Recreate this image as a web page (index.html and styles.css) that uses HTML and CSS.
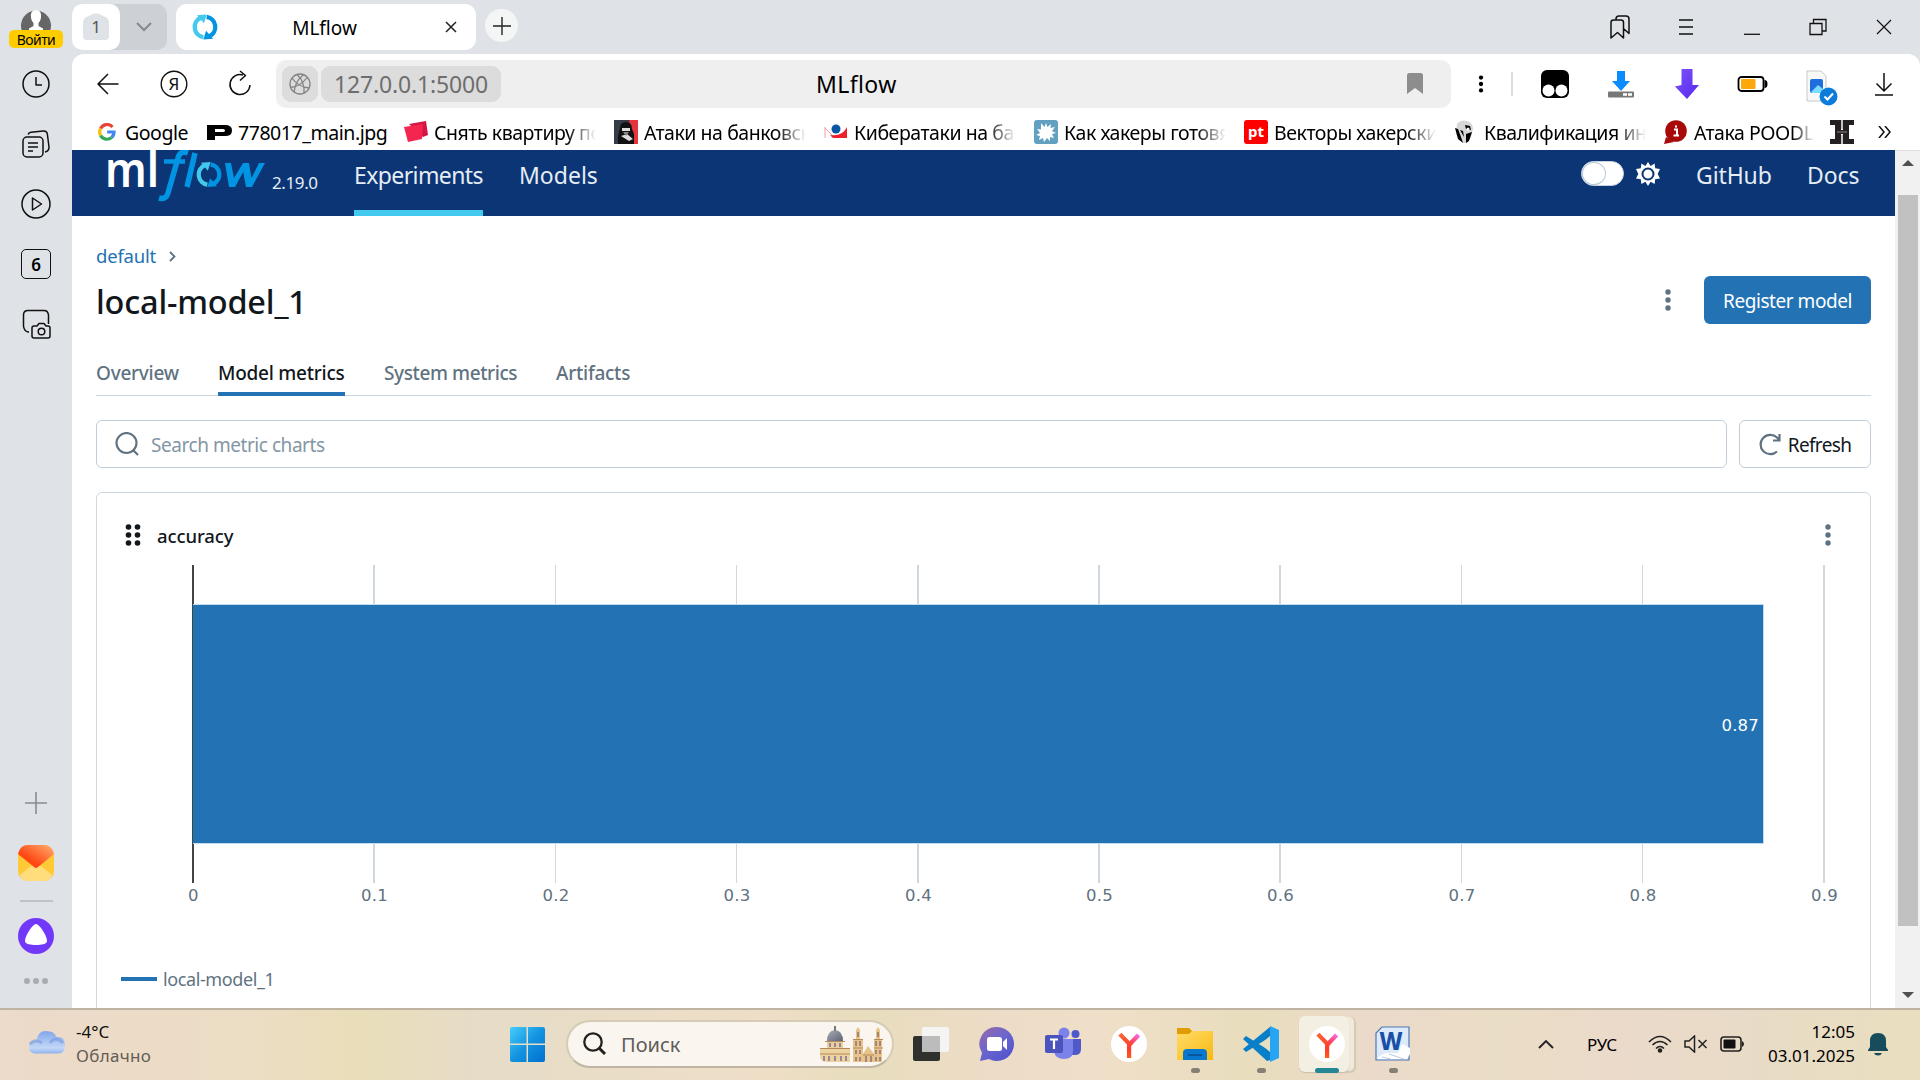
FILE: index.html
```html
<!DOCTYPE html>
<html lang="ru">
<head>
<meta charset="utf-8">
<title>MLflow</title>
<link rel="stylesheet" href="styles.css">
</head>
<body>
<svg class="defs" width="0" height="0">
  <defs>
    <linearGradient id="mailflap" x1="0" y1="1" x2="1" y2="0"><stop offset=".35" stop-color="#ff4714"/><stop offset="1" stop-color="#ffb070"/></linearGradient>
    <linearGradient id="win" x1="0" y1="0" x2="1" y2="1"><stop offset="0" stop-color="#45cdfc"/><stop offset=".5" stop-color="#1494e0"/><stop offset="1" stop-color="#0070cf"/></linearGradient>
    <linearGradient id="chat" x1="0" y1="0" x2=".8" y2="1"><stop offset="0" stop-color="#9a6aa8"/><stop offset=".5" stop-color="#6c66cc"/><stop offset="1" stop-color="#5153d0"/></linearGradient>
    <linearGradient id="yleft" x1="0" y1="0" x2="0" y2="1"><stop offset="0" stop-color="#fa6b3a"/><stop offset=".6" stop-color="#ff3a2a"/><stop offset="1" stop-color="#ff5a1c"/></linearGradient>
    <linearGradient id="yright" x1="0" y1="1" x2="1" y2="0"><stop offset=".15" stop-color="#ff3b3b"/><stop offset="1" stop-color="#f96ae6"/></linearGradient>
    <linearGradient id="folder" x1="0" y1="0" x2="1" y2="1"><stop offset="0" stop-color="#ffdc6b"/><stop offset="1" stop-color="#f9b90f"/></linearGradient>
    <linearGradient id="cloud" x1="0" y1="0" x2="0" y2="1"><stop offset="0" stop-color="#82a6ea"/><stop offset=".75" stop-color="#c3d8f7"/><stop offset="1" stop-color="#8fb2ee"/></linearGradient>
    <linearGradient id="dome" x1="0" y1="0" x2="1" y2="1"><stop offset="0" stop-color="#a9acb8"/><stop offset="1" stop-color="#5f6475"/></linearGradient>
    <linearGradient id="purple" x1="0" y1="0" x2="1" y2="1"><stop offset="0" stop-color="#7c55f7"/><stop offset="1" stop-color="#5726f0"/></linearGradient>
    <symbol id="yandex" viewBox="0 0 36 36"><circle cx="18" cy="18" r="18" fill="#fff"/><path d="M18 19 27.6 9" stroke="url(#yright)" stroke-width="4.4"/><path d="M7.3 9.4 16 18.5V32h4.2V16.8L10.5 6.8z" fill="url(#yleft)"/></symbol>
    <symbol id="kebab" viewBox="0 0 8 24"><circle cx="4" cy="4" r="2.7"/><circle cx="4" cy="12" r="2.7"/><circle cx="4" cy="20" r="2.7"/></symbol>
    <symbol id="cycle" viewBox="0 0 24 24"><path d="M10.500 21.400A9.500 9.500 0 0 1 8 3.400" fill="none" stroke="#43c9ed" stroke-width="4"/><path d="M4.500 1.200 13.500.5 11 8.500z" fill="#43c9ed"/><path d="M13.500 2.600A9.500 9.500 0 0 1 16 20.600" fill="none" stroke="#0194e2" stroke-width="4"/><path d="m19.500 22.800-9 .7 2.500-8z" fill="#0194e2"/></symbol>
  </defs>
</svg>

<div class="browser">
  <aside class="rail">
    <div class="account">
      <svg width="30" height="25" viewBox="0 0 30 25"><path d="M1 25A15 15 0 1 1 29 25z" fill="#666"/><path d="M15 4c-4 0-5.500 3-5 7 .3 3 1 4.500 2.500 6v3L8 22.500V25h14v-2.500L17.500 20v-3c1.500-1.500 2.200-3 2.500-6 .5-4-1-7-5-7z" fill="#fff"/></svg>
      <span class="login">Войти</span>
    </div>
    <div class="cell"><svg width="30" height="30" class="line"><circle cx="15" cy="15" r="13"/><path d="M15 8v8h6"/></svg></div>
    <div class="cell"><svg width="30" height="30" class="line"><rect x="2" y="8" width="20" height="20" rx="4"/><path d="M7 5.500Q8 3.500 10 3.200L22 2q4-.3 4.400 3.500L28 18q.3 4-4 5M7 14h10M7 18h10M7 22h5"/></svg></div>
    <div class="cell"><svg width="30" height="30" class="line"><circle cx="15" cy="15" r="14"/><path d="M11.500 9v12l9-6z"/></svg></div>
    <div class="cell"><span class="count">6</span></div>
    <div class="cell"><svg width="30" height="30" class="line"><path d="M8 23H7q-4-1-4.500-6V6q0-4.500 4.500-4.500h16q4 0 4.500 4.500v9M14 17h2l2-2.500h5L25 17h2q2 0 2 2v8q0 2-2 2H13q-2 0-2-2v-8q0-2 2-2z"/><circle cx="20.500" cy="22.500" r="3.300"/></svg></div>
    <div class="spring"></div>
    <div class="cell"><svg width="22" height="22"><path d="M11 0v22M0 11h22" stroke="#888c90" stroke-width="1.600"/></svg></div>
    <div class="cell"><svg width="36" height="36"><rect width="36" height="36" rx="10" fill="#ffca35"/><path d="M2 30 18 17l16 13q-2 6-8 6H10q-6 0-8-6z" fill="#ffdc7c"/><path d="M0 9Q2 0 10 0h16q8 0 10 9L20 22q-2 2-4 0z" fill="url(#mailflap)"/></svg></div>
    <div class="rule"><i></i></div>
    <div class="cell alice"><svg width="36" height="36"><circle cx="18" cy="18" r="18" fill="#7238fa"/><path d="M18 6c3.500 0 11 12 11 17 0 3.300-6 4-11 4s-11-.7-11-4C7 18 14.500 6 18 6z" fill="#fff"/></svg></div>
    <div class="cell more"><svg width="24" height="6" fill="#a9adb1"><circle cx="3" cy="3" r="3"/><circle cx="12" cy="3" r="3"/><circle cx="21" cy="3" r="3"/></svg></div>
  </aside>

  <section class="window">
    <header class="tabs">
      <div class="group"><span class="group-count"><svg width="26" height="28"><path d="M0 9q0-3 2.500-4.500L10.500.8q2.500-1.200 5 0l8 3.700Q26 6 26 9v14q0 4-4 4H4q-4 0-4-4z" fill="#dfe2e7"/><text x="13" y="20" text-anchor="middle" font-size="17" fill="#555">1</text></svg></span><span class="group-more"><svg width="16" height="10"><path d="m1 1 7 7 7-7" fill="none" stroke="#85898d" stroke-width="2"/></svg></span></div>
      <div class="tab"><svg width="26" height="26"><use href="#cycle"/></svg><span class="tab-name">MLflow</span><svg width="12" height="12"><path d="m1 1 10 10M11 1 1 11" stroke="#222" stroke-width="1.500"/></svg></div>
      <div class="newtab"><svg width="18" height="18"><path d="M9 0v18M0 9h18" stroke="#222" stroke-width="1.400"/></svg></div>
      <div class="spring"></div>
      <div class="wincell"><svg width="20" height="24" class="line"><path d="M1 23V7.500Q1 5 3.500 5h7.500q2.500 0 2.500 2.500V23l-6-5.500zM6 4.500V4q0-3 3-3h7q3 0 3 3v14.500l-5-4.500"/></svg></div>
      <div class="wincell"><svg width="14" height="16"><path d="M0 1h14M0 8h14M0 15h14" stroke="#111" stroke-width="1.400"/></svg></div>
      <div class="wincell"><svg width="16" height="16"><path d="M0 15.300h16" stroke="#111" stroke-width="1.300"/></svg></div>
      <div class="wincell"><svg width="18" height="18"><path d="M1 5.500h12v11H1zM4.500 5V1.500H17V13h-4" fill="none" stroke="#111" stroke-width="1.300"/></svg></div>
      <div class="wincell"><svg width="16" height="16"><path d="m1 1 14 14M15 1 1 15" stroke="#111" stroke-width="1.200"/></svg></div>
    </header>

    <div class="chrome">
      <div class="toolbar">
        <div class="nav"><svg width="22" height="22" class="line"><path d="M21.500 11H1M11 1 1 11l10 10"/></svg></div>
        <div class="nav"><svg width="28" height="28"><circle cx="14" cy="14" r="12.800" fill="none" stroke="#111" stroke-width="1.400"/><text x="14" y="20" text-anchor="middle" font-size="17" fill="#111">Я</text></svg></div>
        <div class="nav"><svg width="24" height="28" class="line"><path d="M15 5A10 10 0 1 0 22 15M12 1l5.500 4.500-5.500 5"/></svg></div>
        <div class="address">
          <span class="globe"><svg width="22" height="22" fill="none" stroke="#848484" stroke-width="1.300"><circle cx="11" cy="11" r="10"/><path d="M3 5q6 9 17.500 10M2 14.500Q12 13 18 4.500M5 19.500Q6 8 14.500 1.700M8 1.500q8 7 7 19"/></svg></span>
          <span class="host">127.0.0.1:5000</span>
          <span class="page-name">MLflow</span>
          <svg width="16" height="22"><path d="M0 2.500Q0 0 2.500 0h11Q16 0 16 2.500V21l-8-6-8 6z" fill="#8d8d8d"/></svg>
        </div>
        <svg class="tool-more" width="8" height="24" viewBox="-1 -1 10 26"><use href="#kebab" width="8" height="24"/></svg>
        <i class="divider"></i>
        <div class="exts">
          <div><svg width="28" height="28"><rect width="28" height="28" rx="6"/><circle cx="7.500" cy="20.500" r="6" fill="#fff"/><circle cx="20.500" cy="20.500" r="6" fill="#fff"/></svg></div>
          <div><svg width="26" height="28"><path d="M9 1h8v10h5l-9 10-9-10h5z" fill="#0a8cff"/><rect y="21.500" width="26" height="6" rx="1" fill="#777"/><path d="M15 24.500h4M20 24.500h4" stroke="#fff" stroke-width="2.500"/></svg></div>
          <div><svg width="24" height="30"><path d="M6.500 0h11v16H24L12 30 0 17.500 6.500 16z" fill="url(#purple)"/></svg></div>
          <div><svg width="32" height="16"><rect x="1.500" y="1" width="25" height="14" rx="3" fill="#fff" stroke="#000" stroke-width="1.800"/><rect x="4" y="3" width="14.500" height="10" rx="1" fill="#ffa60a"/><path d="M27.500 4q3 0 3 4t-3 4z"/></svg></div>
          <div class="pic"><svg width="32" height="36"><path d="M1 1h14l5 5v25H1z" fill="#f8f8f8" stroke="#c8c8c8"/><rect x="4" y="9" width="13" height="14" rx="2" fill="#1d6edc"/><path d="m5 22 7-7 5 4v3q0 1-1 1H6z" fill="#7bdcff"/><circle cx="22.500" cy="26.500" r="9" fill="#0b7bdc"/><path d="m18.500 26.500 3 3 5.500-6" fill="none" stroke="#fff" stroke-width="2"/></svg></div>
          <div class="dl"><svg width="18" height="24" class="line"><path d="M9 1v18M1.500 11.500 9 19l7.500-7.500M0 23h18"/></svg></div>
        </div>
      </div>

      <nav class="bookmarks">
        <a class="bm g"><svg width="18" height="18" viewBox="0 0 18 18" fill="none" stroke-width="3.200"><path d="M14.500 4A7.200 7.200 0 0 0 2.600 5.500" stroke="#ea4335"/><path d="M2.600 5.500a7.300 7.300 0 0 0 0 7" stroke="#fbbc05"/><path d="M2.600 12.500a7.200 7.200 0 0 0 11 2" stroke="#34a853"/><path d="M13.600 14.500Q16 12.500 16 9H9.200" stroke="#4285f4"/></svg><span>Google</span></a>
        <a class="bm p"><svg width="25" height="15"><path d="M0 0h18q7 0 7 5.500T18 11H8v4H0zM8 4v3h8q2 0 2-1.500T16 4z" fill-rule="evenodd"/></svg><span>778017_main.jpg</span></a>
        <a class="bm fade"><svg width="24" height="22"><path d="m5 3 17-3 2 14-5 2z" fill="#d31744"/><path d="m0 6 19-3-1 15-14 3z" fill="#f4264f"/></svg><span>Снять квартиру по</span></a>
        <a class="bm fade"><svg width="24" height="24"><path d="M0 0h24v24H0z" fill="#353c48"/><path d="M15 0h9v24h-6z" fill="#e5343c"/><path d="M6 8q0-6 6-6t6 7l2 5v10H4V16z" fill="#111"/><path d="M8 8h8v3H8zM7 16l6-2 6 5-4 2z" fill="#ddd"/><path d="M9 12h6l-3 4z" fill="#888"/></svg><span>Атаки на банковск</span></a>
        <a class="bm fade"><svg width="24" height="16"><path d="m1 4 9 9M1 3v11" stroke="#f59ba0" fill="none"/><path d="M6 11q12 2 17-8v11H9z" fill="#ee202b"/><circle cx="12" cy="5" r="4.500" fill="#0a55a5"/></svg><span>Кибератаки на ба</span></a>
        <a class="bm fade"><svg width="24" height="24"><rect width="24" height="24" rx="3" fill="#61a0c0"/><path d="m12 3 1.500 4L17 4l-.5 4L21 7l-3 4 4 2-4 1 2 4-4-1v4l-3-3-3 4-1-4-4 2 1-4-4-1 4-2-3-4 4 .5L7 3l3.500 4z" fill="#fff"/></svg><span>Как хакеры готовя</span></a>
        <a class="bm fade"><svg width="24" height="24"><rect width="24" height="24" rx="3" fill="#f00"/><text x="12" y="16.500" text-anchor="middle" font-size="15" font-weight="700" fill="#fff">pt</text></svg><span>Векторы хакерски</span></a>
        <a class="bm fade"><svg width="24" height="24"><path d="M3 4q4-5 10-3 6 2 6 8l-2 8-5 6H9L2 14z" fill="#d6d6d6"/><path d="m1 8 3 1 3 8 2 6-5-4zM11 5l5 1 1 4-5-1zM12 14l6-2-3 9-3 2zM6 10l3 1 1 6z"/><circle cx="14" cy="9" r="1.500" fill="#fff"/></svg><span>Квалификация ин</span></a>
        <a class="bm fade poodle"><svg width="24" height="24"><circle cx="12" cy="11" r="10.800" fill="#a80a0a"/><path d="m2 17-2 7 10-2z" fill="#a80a0a"/><path d="M10 9.500h3V15M9.500 15.500H15M11 6.500h2" stroke="#fff" stroke-width="2" fill="none"/></svg><span>Атака POODL</span></a>
        <a class="bm last"><svg width="24" height="24"><path d="M0 0h11v10h2V0h11v5h-5v14h5v5H13V14h-2v10H0v-5h5V5H0z" fill="#242021"/><path d="M7 12h10M12 0v9M12 15v9" stroke="#8a8788"/></svg></a>
        <svg class="chev" width="13" height="12" fill="none" stroke="#111" stroke-width="1.500"><path d="m1 0 5 6-5 6M7 0l5 6-5 6"/></svg>
      </nav>
    </div>

    <div class="viewport">
      <main class="page">
        <div class="mlbar">
          <svg class="logo" width="165" height="66">
            <text x="-2" y="37" font-size="49" textLength="54" lengthAdjust="spacingAndGlyphs" fill="#fff" font-weight="600">ml</text>
            <path d="M81 3q-8-3-10 5L61 43q-2 7-9 5" fill="none" stroke="#0194e2" stroke-width="5.500"/><path d="M57 11.500h21" stroke="#0194e2" stroke-width="4.500"/>
            <path d="M88 3 80 37" stroke="#0194e2" stroke-width="5.500"/>
            <svg x="89" y="11.500" width="26" height="26"><use href="#cycle"/></svg>
            <path d="M120 13h6l3 15 9-15h6l2.500 15L154 13h6L147 37h-6l-2.800-15L130 37h-6z" transform="translate(-2)" fill="#0194e2"/>
          </svg>
          <span class="version">2.19.0</span>
          <a class="mlnav on">Experiments</a>
          <a class="mlnav models">Models</a>
          <div class="spring"></div>
          <span class="toggle"><i></i></span>
          <svg class="gear" width="26" height="26"><path d="m13 1 2.600 4 4-2.500.6 4.800 4.800.7-2.300 5 2.300 4.500-4.800.8-.6 4.700-4-2.300L13 25l-2.600-4.300-4 2.300-.6-4.700L1 17.500 3.300 13 1 8l4.800-.7.6-4.800 4 2.500z" fill="#fff"/><circle cx="13" cy="13" r="5.500" fill="none" stroke="#0b3574" stroke-width="2"/></svg>
          <a class="mllink">GitHub</a>
          <a class="mllink docs">Docs</a>
        </div>

        <div class="content">
          <div class="crumb"><a>default</a><svg width="7" height="11"><path d="m1 1 4.500 4.500L1 10" fill="none" stroke="#5f7281" stroke-width="1.800"/></svg></div>
          <div class="titlebar"><h1>local-model_1</h1><svg class="kebab" width="8" height="24"><use href="#kebab"/></svg><button class="primary">Register model</button></div>
          <div class="subtabs"><a class="t1">Overview</a><a class="t2 on">Model metrics</a><a class="t3">System metrics</a><a class="t4">Artifacts</a></div>
          <div class="searchrow">
            <div class="search"><svg width="24" height="24" fill="none" stroke="#5f7281" stroke-width="2.100"><circle cx="11.500" cy="11" r="10"/><path d="m18 18 5 5"/></svg><span>Search metric charts</span></div>
            <button class="refresh"><svg width="22" height="23" fill="none" stroke="#5f7281" stroke-width="2.200"><path d="M18 18.500A9.700 9.700 0 1 1 18 4.500l2 2M20.500 1v6.500H14"/></svg><span>Refresh</span></button>
          </div>
          <section class="card">
            <div class="cardhead"><svg width="16" height="22" fill="#11171c"><circle cx="3.500" cy="3" r="2.800"/><circle cx="12.500" cy="3" r="2.800"/><circle cx="3.500" cy="11" r="2.800"/><circle cx="12.500" cy="11" r="2.800"/><circle cx="3.500" cy="19" r="2.800"/><circle cx="12.500" cy="19" r="2.800"/></svg><span>accuracy</span><svg class="kebab" width="8" height="24"><use href="#kebab"/></svg></div>
            <svg class="chart" width="1725" height="414">
              <g fill="#cfd8e0">
                <rect x="252" y="12" width="2" height="318"/><rect x="434" y="12" width="1" height="318"/><rect x="615" y="12" width="1" height="318"/><rect x="796" y="12" width="2" height="318"/><rect x="977" y="12" width="2" height="318"/><rect x="1158" y="12" width="2" height="318"/><rect x="1340" y="12" width="1" height="318"/><rect x="1521" y="12" width="1" height="318"/><rect x="1702" y="12" width="2" height="318"/>
              </g>
              <rect x="71" y="12" width="2" height="318" fill="#444"/>
              <rect x="72" y="51" width="1571" height="240" fill="#c3dbee"/>
              <rect x="72" y="52" width="1570" height="238" fill="#2272b4"/>
              <text class="value" x="1638" y="178">0.87</text>
              <g class="ticks"><text x="72.500" y="348">0</text><text x="253.500" y="348">0.1</text><text x="435" y="348">0.2</text><text x="616" y="348">0.3</text><text x="797.500" y="348">0.4</text><text x="978.500" y="348">0.5</text><text x="1159.500" y="348">0.6</text><text x="1341" y="348">0.7</text><text x="1522" y="348">0.8</text><text x="1703.500" y="348">0.9</text></g>
            </svg>
            <div class="legend"><i></i><span>local-model_1</span></div>
          </section>
        </div>
      </main>
      <div class="scroll"><svg width="12" height="6"><path d="M0 6 6 0l6 6z" fill="#505050"/></svg><i></i><svg width="12" height="6"><path d="m0 0 6 6 6-6z" fill="#505050"/></svg></div>
    </div>
  </section>
</div>

<footer class="taskbar">
  <div class="weather"><svg width="36" height="24"><path d="M6 23.500a6 6 0 0 1 0-13q1-.3 1.500 0Q8.500 1 17 1t10.500 6Q36 6 36 15t-7 8.500z" fill="url(#cloud)"/><path d="M1 14q5-6 12-1M21 13q5-8 13 0" fill="none" stroke="#6f93d8" opacity=".5" stroke-width="3"/></svg><div><b>-4°C</b><span>Облачно</span></div></div>
  <svg class="start" width="35" height="35" fill="url(#win)"><path d="M2 0h14.500v16.500H0V2q0-2 2-2zM18 0H33q2 0 2 2v14.500H18zM0 18h16.500V35H2q-2 0-2-2zM18 18H35V33q0 2-2 2H18z"/></svg>
  <div class="find"><svg width="24" height="24" fill="none" stroke="#222"><circle cx="10" cy="10" r="8.700" stroke-width="2.300"/><path d="m16 16 6 6" stroke-width="3"/></svg><span>Поиск</span>
    <svg class="castle" width="64" height="37"><path d="M7 15q0-10 8-11 8 1 8 11z" fill="url(#dome)"/><path d="M15 0v5" stroke="#777" stroke-width="2"/><path d="M7 15h16v7H7z" fill="#e8cf9b"/><path d="M0 22h30v14H7q-5 0-7-4z" fill="#ecd3a0"/><path d="M0 22.500h30M0 28h30M5 15.500h20" stroke="#b48b58"/><path d="M4 30v5M9 30v5M15 30v5M21 30v5M26 30v5M10 17v4M15 17v4M20 17v4" stroke="#7d6e92" stroke-width="1.500"/><path d="M33 36V13h3V4l2-3 2 3v9h3v15l5-8 6 8V13h2V4l2-3 2 3v9h2v23z" fill="#e6c48c"/><path d="M38 6v5M58 6v5M36 15v5M40 15v5M56 15v5M60 15v5M36 24v4M40 24v4M56 24v4M60 24v4M36 31v4M40 31v4M56 31v4M60 31v4M46 30v6M51 30v6" stroke="#85656e" stroke-width="1.300"/><path d="M33 13.500h10M33 22h10M54 13.500h9M54 22h9M43 29h11" stroke="#b48b58"/></svg>
  </div>
  <div class="apps">
    <div class="app"><svg width="36" height="36"><rect y="10" width="27" height="25" rx="2" fill="#30302f"/><rect x="9" y="1" width="27" height="25" rx="2" fill="#f4f4f4" opacity=".95"/><path d="M9 10h18v16H9z" fill="#bcbcbc"/></svg></div>
    <div class="app"><svg width="36" height="36"><path d="M18 1a17 17 0 1 1-8 32l-9 2 2-8A17 17 0 0 1 18 1z" fill="url(#chat)"/><rect x="8" y="11" width="15" height="14" rx="2.500" fill="#fff"/><path d="m24 16 4-4v12l-4-4z" fill="#fff"/></svg></div>
    <div class="app"><svg width="36" height="36"><circle cx="19" cy="7" r="5.500" fill="#7b83eb"/><circle cx="30.500" cy="8" r="4" fill="#5059c9"/><path d="M24 13h12v10q0 6-6 6h-6z" fill="#5059c9"/><path d="M9 13h19v12q0 8-9 8T9 25z" fill="#7b83eb"/><rect y="9" width="18" height="18" rx="2" fill="#4b53bc"/><path d="M5 13.500h8M9 13.500V23" stroke="#fff" stroke-width="2.200"/></svg></div>
    <div class="app"><svg width="36" height="36"><use href="#yandex"/></svg></div>
    <div class="app dot"><svg width="36" height="36"><path d="M0 2h12l4 4v8H0z" fill="#e09c00"/><path d="M0 8h12l3-3h21v29H0z" fill="url(#folder)"/><path d="M6 34v-7q0-4 4-4h16q4 0 4 4v7z" fill="#0878cf"/><path d="M11 29h14" stroke="#064d8d" stroke-width="1.500"/></svg></div>
    <div class="app dot"><svg width="36" height="36"><path d="M3 10 0 13l24 22 3-1V25zM27 11V1L0 23l3 3z" fill="#0a7fc9"/><path d="M27 0 36 4v28l-9 4z" fill="#27a4f2"/><path d="M27 10v16l-9-8z" fill="#e6dfc2"/></svg></div>
    <div class="app active"><svg width="36" height="36"><use href="#yandex"/></svg></div>
    <div class="app dot"><svg width="36" height="36"><path d="M7 1h27v33H1V7z" fill="#dceafa" stroke="#4d77b4" stroke-width="1.200"/><text x="16" y="24" text-anchor="middle" font-size="25" font-weight="800" textLength="23" lengthAdjust="spacingAndGlyphs" fill="#174fa9">W</text><path d="m23 27 4-9 8 4v6l-3 5H2q6-7 12-6z" fill="#fff"/><path d="m14 28 15 5M7 31l9 2" stroke="#b9cbe2"/></svg></div>
  </div>
  <div class="tray">
    <svg class="up" width="16" height="10"><path d="m1 9 7-7 7 7" fill="none" stroke="#222" stroke-width="1.900"/></svg>
    <span class="lang">РУС</span>
    <svg class="wifi" width="24" height="18" fill="none" stroke="#222" stroke-width="1.600"><path d="M1 7q11-11 22 0M4.500 10q7.500-7 15 0M8 13.500q4-4 8 0"/><circle cx="12" cy="15.500" r="1.500" fill="#222"/></svg>
    <svg class="sound" width="24" height="18" fill="none" stroke="#222" stroke-width="1.500"><path d="M1 6h4l5.500-5v16L5 12H1zM14.500 5l8 8M22.500 5l-8 8"/></svg>
    <svg class="batt" width="24" height="16"><rect x="1" y="1" width="20" height="14" rx="3" fill="none" stroke="#222" stroke-width="1.600"/><rect x="3.500" y="3.500" width="12" height="9" rx="1" fill="#111"/><path d="M22 5q2 1 2 3t-2 3z" fill="#222"/></svg>
    <div class="clock"><span>12:05</span><b>03.01.2025</b></div>
    <svg class="bell" width="20" height="24"><path d="M0 18l2-3V9q0-8 8-8t8 8v6l2 3v1H0zM6 21h8q-1 2.500-4 2.500T6 21z" fill="#164c5c"/></svg>
  </div>
</footer>
</body>
</html>
```
FILE: styles.css
```css
* { box-sizing: border-box; }
body { margin: 0; width: 1920px; height: 1080px; overflow: hidden; font-family: "Noto Sans", "Open Sans", sans-serif; color: #000; }
svg { display: block; flex: none; }
h1 { margin: 0; }
button { font: inherit; padding: 0; }
span, a, b { white-space: nowrap; }
.defs { position: absolute; }
.spring { flex: 1; }
.line { fill: none; stroke: #111; stroke-width: 1.5; stroke-linejoin: round; }

.browser { display: flex; height: 1008px; background: #dfe2e7; }
.rail { width: 72px; padding-bottom: 9px; display: flex; flex-direction: column; }
.account { height: 54px; padding-top: 6px; display: flex; flex-direction: column; align-items: center; flex: none; }
.login { width: 54px; height: 18px; margin-top: -1px; border-radius: 5px; background: #fc0; font-size: 14px; line-height: 19px; text-align: center; letter-spacing: -.6px; }
.cell { height: 60px; display: flex; align-items: center; justify-content: center; flex: none; }
.count { width: 30px; height: 30px; border: 1.500px solid #111; border-radius: 5px; font-size: 17px; font-weight: 600; line-height: 30px; text-align: center; }
.rule { height: 16px; padding: 7px 19px 0 20px; }
.rule i { display: block; height: 2px; background: #bfc3c8; }
.alice { height: 54px; }
.more { height: 36px; }

.window { width: 1848px; display: flex; flex-direction: column; }
.tabs { height: 54px; padding: 4px 3px 4px 0; display: flex; align-items: flex-start; }
.group { width: 95px; height: 46px; margin-right: 9px; border-radius: 10px; background: #cdd0d4; display: flex; }
.group-count { width: 48px; border-radius: 10px; background: #fff; display: flex; align-items: center; justify-content: center; }
.group-more { width: 47px; display: flex; align-items: center; justify-content: center; }
.tab { width: 300px; height: 46px; padding: 0 19px 0 16px; border-radius: 11px; background: #fff; display: flex; align-items: center; }
.tab-name { flex: 1; text-align: center; font-size: 19px; padding: 1px 14px 0 0; }
.newtab { width: 33px; height: 33px; margin: 5px 0 0 9px; border-radius: 50%; background: #f4f6f6; display: flex; align-items: center; justify-content: center; }
.wincell { width: 66px; height: 46px; display: flex; align-items: center; justify-content: center; }

.chrome { height: 96px; background: #fff; border-radius: 12px 12px 0 0; }
.toolbar { height: 60px; padding-left: 3px; display: flex; align-items: center; }
.nav { width: 66px; display: flex; justify-content: center; }
.address { width: 1175px; height: 48px; padding: 0 28px 0 6px; border-radius: 10px; background: #efefef; display: flex; align-items: center; margin-left: 3px; }
.globe { width: 36px; height: 36px; border-radius: 9px; background: #dcdcdc; display: flex; align-items: center; justify-content: center; }
.host { width: 180px; height: 36px; margin-left: 3px; border-radius: 9px; background: #dcdcdc; color: #6e6e6e; font-size: 23px; line-height: 37px; text-align: center; letter-spacing: -.15px; }
.page-name { flex: 1; padding-left: 315px; font-size: 23px; line-height: 36px; letter-spacing: .4px; }
.tool-more { margin-left: 26px; }
.divider { width: 2px; height: 24px; margin: 0 9px 0 26px; background: #dedede; }
.exts { display: flex; }
.exts div { width: 66px; height: 36px; display: flex; align-items: center; justify-content: center; }
.exts .pic { padding-top: 7px; padding-left: 6px; }
.exts .dl { width: 64px; }
.bookmarks { height: 36px; padding-left: 26px; display: flex; align-items: center; font-size: 19.500px; }
.bm { display: flex; align-items: center; gap: 6px; height: 36px; }
.bm span { line-height: 36px; height: 36px; padding-top: 1px; letter-spacing: -.45px; }
.g { width: 109px; gap: 9px; }
.p { width: 197px; }
.fade { width: 210px; }
.fade span { width: 162px; overflow: hidden; -webkit-mask-image: linear-gradient(90deg, #000 82%, transparent 100%); mask-image: linear-gradient(90deg, #000 82%, transparent 100%); }
.poodle { width: 166px; }
.poodle span { width: 120px; }
.chev { margin-left: 24px; }

.viewport { height: 858px; display: flex; overflow: hidden; }
.page { width: 1823px; background: #fff; }
.mlbar { height: 66px; padding: 0 37px 0 35px; background: #0b3574; color: #e5edf5; display: flex; }
.version { width: 47px; margin: 18px 35px 0 0; font-size: 17px; line-height: 30px; letter-spacing: -.4px; }
.mlnav { width: 129px; height: 66px; font-size: 23px; line-height: 51px; }
.mlnav.on { border-bottom: 6px solid #43c9ed; letter-spacing: -.6px; }
.models { margin-left: 36px; width: 80px; }
.toggle { width: 43px; height: 25px; margin-top: 11px; border-radius: 13px; background: #fff; border: 1px solid #c8d3df; }
.toggle i { display: block; width: 24px; height: 23px; border-radius: 50%; border: 1px solid #b9c8d8; }
.gear { margin: 11px 35px 0 11px; }
.mllink { width: 75px; font-size: 23px; line-height: 51px; letter-spacing: -.1px; }
.docs { width: 51px; margin-left: 36px; }

.content { padding: 0 24px; }
.crumb { height: 58px; padding-top: 20px; display: flex; align-items: center; gap: 13px; color: #2272b4; font-size: 18.500px; letter-spacing: -.2px; }
.crumb svg { margin-top: 2px; }
.titlebar { height: 52px; display: flex; align-items: center; }
.titlebar h1 { font-size: 32.500px; font-weight: 500; color: #11171c; flex: 1; line-height: 50px; padding-top: 4px; letter-spacing: -.2px; }
.kebab { fill: #5f7281; }
.primary { width: 167px; height: 48px; padding-top: 1px; margin-left: 32px; border: 0; border-radius: 6px; background: #2272b4; color: #fff; font-size: 19px; letter-spacing: -.45px; }
.subtabs { height: 70px; border-bottom: 1px solid #cfd8e0; display: flex; color: #5f7281; font-size: 19px; font-weight: 500; align-items: flex-end; letter-spacing: -.25px; }
.subtabs a { height: 46px; line-height: 47px; margin-bottom: -1px; border-bottom: 4px solid transparent; margin-right: 38px; }
.subtabs .on { color: #11171c; border-color: #2272b4; }
.t1 { width: 84px; } .subtabs .t2 { width: 127px; margin-right: 39px; } .subtabs .t3 { width: 134px; letter-spacing: -.4px; }
.searchrow { margin-top: 24px; height: 48px; display: flex; gap: 12px; }
.search { width: 1631px; padding-left: 18px; border: 1px solid #c0cdd8; border-radius: 6px; display: flex; align-items: center; gap: 12px; color: #8396a5; font-size: 19px; letter-spacing: -.45px; }
.search span, .refresh span { padding-top: 2px; }
.refresh { width: 132px; border: 1px solid #c0cdd8; border-radius: 6px; background: #fff; color: #11171c; display: flex; align-items: center; justify-content: center; gap: 7px; font-size: 19px; letter-spacing: -.65px; }
.card { margin-top: 24px; height: 560px; border: 1px solid #cfd8e0; border-radius: 6px; padding: 24px; }
.cardhead { height: 36px; padding: 0 14px 0 4px; display: flex; align-items: center; font-size: 18.500px; color: #11171c; }
.cardhead span { flex: 1; padding-left: 16px; font-weight: 500; letter-spacing: -.1px; }
.ticks { font: 16.500px "DejaVu Sans", sans-serif; fill: #5f7281; text-anchor: middle; letter-spacing: .3px; }
.value { font: 16.500px "DejaVu Sans", sans-serif; fill: #fff; text-anchor: end; letter-spacing: .2px; }
.legend { display: flex; align-items: center; gap: 6px; font-size: 18px; color: #5f7281; letter-spacing: -.4px; }
.legend i { width: 36px; height: 4px; background: #2272b4; }
.scroll { width: 25px; border-top: 1px solid #ddd; background: #f1f1f1; display: flex; flex-direction: column; align-items: center; padding: 9px 0 10px; }
.scroll i { width: 20px; height: 731px; margin: 29px 0 auto; background: #c1c1c1; }

.taskbar { height: 72px; padding-bottom: 2px; border-top: 2px solid #bfb3a1; background: linear-gradient(90deg, #ecdaca 0, #ecddc5 240px, #e9deb9 360px, #e6dcc7 480px, #eedec7 760px, #e8ddbd 860px, #eddcc7 1000px, #efdfc8 1100px, #e8ddbd 1260px, #ebdaca 1370px, #eaddc5 1500px, #ebdaca 1620px, #e8dbc7 1740px, #e9dec0 1890px); display: flex; align-items: center; }
.weather { width: 510px; padding-left: 29px; display: flex; align-items: center; gap: 11px; font-size: 17px; }
.weather svg { margin-top: -5px; }
.weather div { display: grid; line-height: 24px; }
.weather b { font-weight: 400; color: #111; letter-spacing: 0; }
.weather span { color: #655d55; letter-spacing: .3px; }
.find { width: 328px; height: 48px; margin: 0 4px 0 21px; border: 2px solid #d6cbb5; border-bottom-color: #bfb5a2; border-radius: 24px; background: #faf5ee; display: flex; align-items: center; padding: 0 8px 0 15px; }
.find span { flex: 1; padding-left: 14px; font-size: 20px; color: #5f5c59; }
.apps { display: flex; }
.app { width: 66px; height: 68px; display: flex; align-items: center; justify-content: center; position: relative; }
.dot::after { content: ""; position: absolute; bottom: 5px; left: 29px; width: 9px; height: 5px; border-radius: 3px; background: #877f75; }
.active::before { content: ""; position: absolute; left: 5px; top: 6px; width: 50px; height: 56px; border-radius: 6px; background: #f3efe3; box-shadow: 0 1px 1px #c8bfac, 6px 0 0 -1px #f1eadb, 7px 1px 1px #d3c9b5; }
.active svg { position: relative; }
.active::after { content: ""; position: absolute; bottom: 5px; left: 21px; width: 24px; height: 5px; border-radius: 3px; background: #268593; }
.tray { flex: 1; display: flex; align-items: center; }
.up { margin-left: 112px; }
.lang { width: 71px; padding-left: 33px; margin-right: 23px; font-size: 17px; letter-spacing: -.2px; }
.wifi { margin-right: 12px; }
.sound { margin-right: 12px; }
.clock { width: 111px; display: grid; justify-items: end; font-size: 17px; line-height: 24px; }
.clock b { font-weight: 400; }
.bell { margin-left: 13px; }
```
